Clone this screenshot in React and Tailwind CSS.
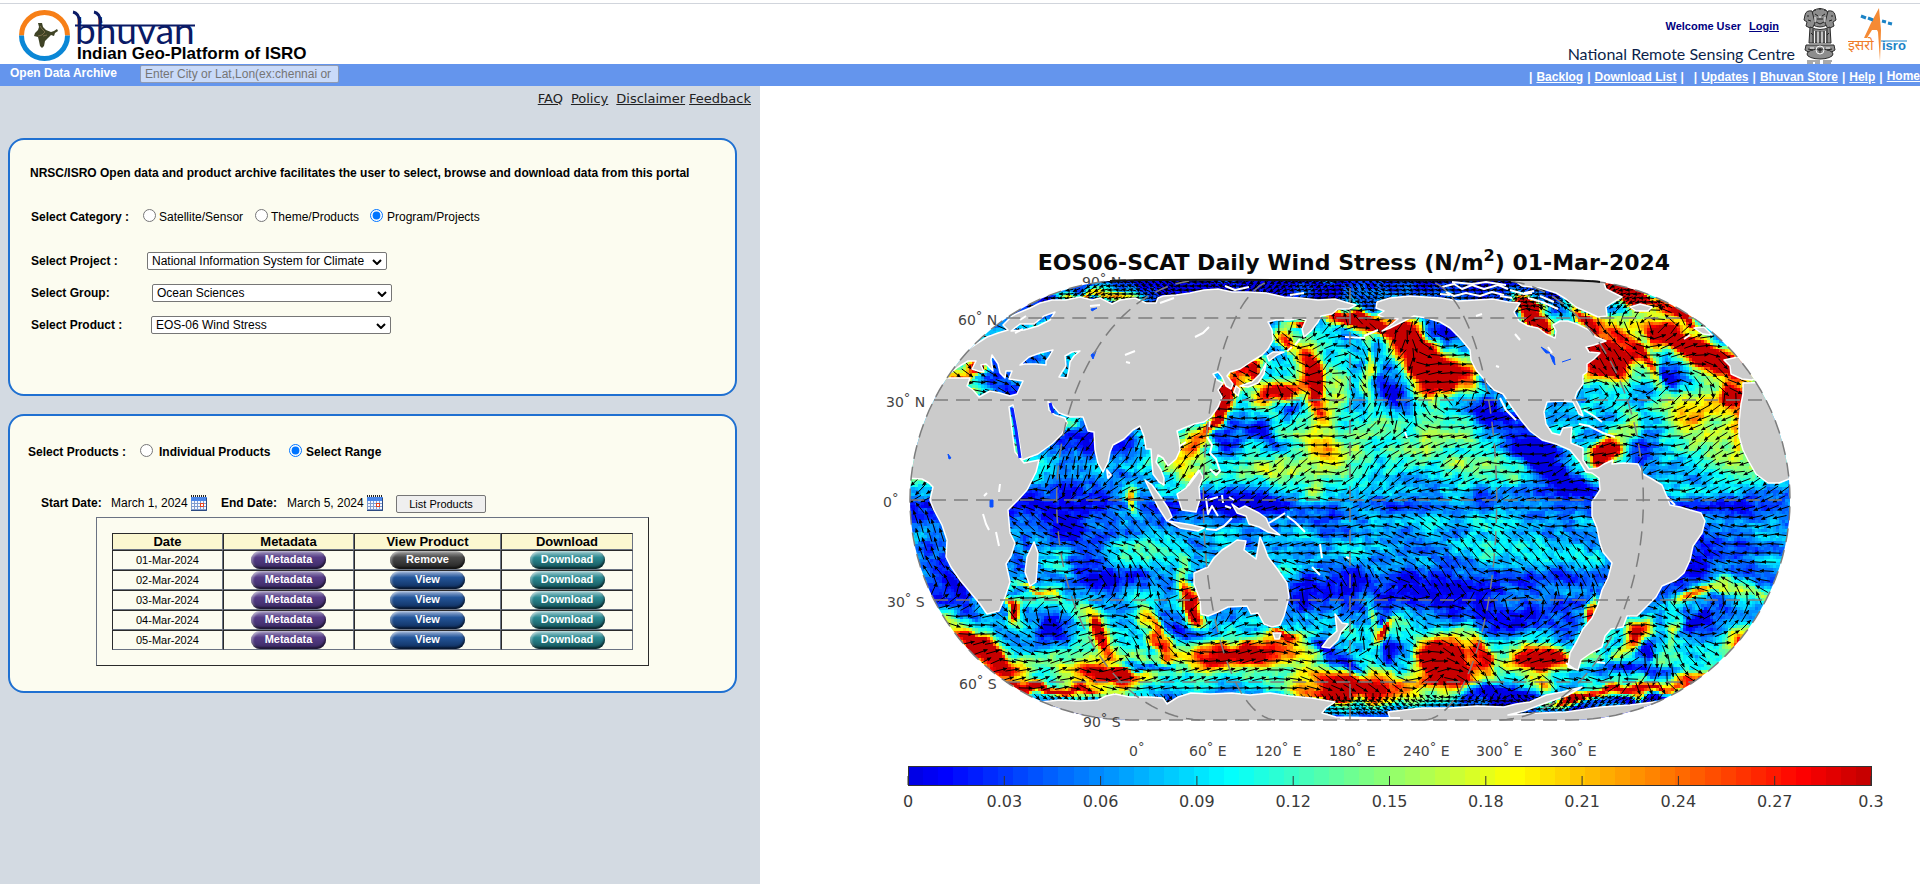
import React from 'react';

/* ---------- wind stress map ---------- */

const CX = 1350;
const CY = 500;
const HALF_W = 440;
const HALF_H = 220;

// Eckert IV, centred on 180E
const project = (lon, lat) => {
  const k = (2 + Math.PI / 2) * Math.sin((lat * Math.PI) / 180);
  let t = (lat * Math.PI) / 360;
  for (let i = 0; i < 30; i++) {
    const c = Math.cos(t);
    const d = 2 * c * (1 + c);
    if (d < 1e-6) break;
    t -= (t + Math.sin(t) * c + 2 * Math.sin(t) - k) / d;
  }
  return [
    CX + ((lon - 180) / 180) * HALF_W * ((1 + Math.cos(t)) / 2),
    CY - HALF_H * Math.sin(t),
  ];
};

const toPath = (pts) => 'M' + pts.map((p) => p[0].toFixed(1) + ' ' + p[1].toFixed(1)).join('L');

const meridian = (lon) => {
  const pts = [];
  for (let lat = -89; lat <= 89; lat += 2) pts.push(project(lon, lat));
  return pts;
};

const parallel = (lat) => [project(0, lat), project(360, lat)];

// half width of the globe at a given height
const edgeAt = (y) => {
  const s = (y - CY) / HALF_H;
  return s * s >= 1 ? 0 : (HALF_W * (1 + Math.sqrt(1 - s * s))) / 2;
};

const outline = (() => {
  const right = [];
  for (let a = -90; a <= 90; a += 3) {
    const r = (a * Math.PI) / 180;
    right.push([CX + (HALF_W * (1 + Math.cos(r))) / 2, CY + HALF_H * Math.sin(r)]);
  }
  const left = right.map(([x, y]) => [2 * CX - x, y]).reverse();
  return toPath([...right, ...left]) + 'Z';
})();

const jet = (u) => {
  const t = 0.1 + 0.83 * Math.max(0, Math.min(1, u));
  const ch = (c) => Math.round(255 * Math.max(0, Math.min(1, 1.5 - Math.abs(4 * t - c))));
  return `rgb(${ch(3)},${ch(2)},${ch(1)})`;
};

const hash = (x, y) => {
  const s = Math.sin(x * 127.1 + y * 311.7) * 43758.5453;
  return s - Math.floor(s);
};

const noise = (x, y) => {
  const xi = Math.floor(x);
  const yi = Math.floor(y);
  const fx = x - xi;
  const fy = y - yi;
  const u = fx * fx * (3 - 2 * fx);
  const v = fy * fy * (3 - 2 * fy);
  const a = hash(xi, yi) * (1 - u) + hash(xi + 1, yi) * u;
  const b = hash(xi, yi + 1) * (1 - u) + hash(xi + 1, yi + 1) * u;
  return a * (1 - v) + b * v;
};

const lerp = (knots, y) => {
  for (let i = 1; i < knots.length; i++) {
    if (y <= knots[i][0]) {
      const [y0, a] = knots[i - 1];
      const [y1, b] = knots[i];
      return a + ((b - a) * (y - y0)) / (y1 - y0);
    }
  }
  return knots[knots.length - 1][1];
};

// x, y, rx, ry, rotation, amount
const STORMS = [
  [1314, 376, 13, 34, -14, 1.1], [1288, 340, 9, 14, -50, 0.8], [1252, 370, 11, 14, 20, 1], [1220, 402, 8, 32, 28, 1.2],
  [1278, 392, 24, 12, -20, 0.9], [1358, 320, 36, 8, 12, 1.3], [1300, 318, 14, 4, -15, 1.1], [1424, 357, 18, 44, -38, 1.6],
  [1447, 376, 22, 13, 10, 0.8], [1465, 365, 8, 10, 0, 0.4], [1368, 365, 5, 40, 5, 0.35], [1340, 385, 8, 20, 0, 0.25],
  [1537, 318, 7, 24, -45, 1.5], [1530, 305, 14, 5, 10, 1], [1586, 320, 10, 26, -55, 1], [1609, 364, 23, 16, 10, 1.5],
  [1598, 347, 12, 7, 0, 1.3], [1624, 336, 9, 34, -45, 0.55], [1650, 366, 8, 28, -30, 0.55], [1688, 345, 52, 13, 27, 1.6],
  [1720, 358, 22, 9, 5, 1], [1703, 404, 48, 22, -5, 0.45], [1731, 394, 9, 11, 0, 1], [1629, 293, 42, 8, 22, 1.3],
  [1680, 313, 22, 6, 35, 1], [1605, 453, 9, 14, 20, 0.9], [1625, 420, 10, 26, 10, 0.25], [1736, 425, 8, 30, 0, 0.3],
  [1314, 442, 34, 16, 20, 0.36], [1280, 470, 60, 14, -5, 0.2], [1318, 488, 14, 14, 0, 0.25], [1434, 440, 70, 18, 0, 0.12],
  [1470, 465, 60, 16, 0, 0.1], [1184, 460, 20, 24, 30, 0.3], [1200, 440, 24, 8, -20, 0.3], [969, 366, 9, 7, 0, 1.1],
  [952, 376, 14, 6, 0, 0.5], [970, 390, 8, 6, 0, 0.5], [1067, 424, 10, 8, 0, 0.3],
  [1127, 500, 5, 14, -25, 0.6], [1110, 292, 30, 5, 0, 0.6], [1040, 320, 14, 5, -20, 0.35], [1080, 296, 20, 4, 0, 0.7],
  [981, 648, 34, 12, 38, 1.6], [1009, 611, 5, 11, 0, 1.2], [1030, 588, 22, 4, 20, 0.5], [1096, 627, 9, 26, -30, 0.95],
  [1108, 672, 34, 14, 0, 0.85], [1156, 634, 8, 32, -30, 0.65], [1196, 607, 7, 22, -30, 1], [1242, 652, 56, 14, -8, 0.9],
  [1280, 634, 14, 4, 0, 0.5], [1356, 688, 54, 14, 5, 0.95], [1322, 694, 20, 6, 0, 0.5], [1048, 688, 54, 5, 5, 1],
  [1384, 632, 5, 15, 42, 1], [1370, 618, 5, 20, -10, 0.4], [1442, 660, 26, 23, 0, 1.3], [1478, 650, 9, 26, -20, 0.55],
  [1455, 682, 30, 8, 0, 0.4], [1542, 656, 26, 12, -5, 1], [1540, 682, 10, 8, 0, 0.6], [1573, 697, 22, 5, -14, 1.2],
  [1640, 689, 60, 5, -4, 0.85], [1690, 679, 26, 5, 0, 0.5], [1589, 612, 4, 14, 10, 0.8], [1633, 637, 8, 20, 35, 0.8],
  [1697, 594, 24, 6, -22, 0.7], [1742, 588, 30, 9, 15, 0.45], [1733, 650, 5, 18, 45, 0.9], [1730, 637, 20, 7, -25, 0.4],
  [1675, 630, 6, 20, 20, 0.4], [1140, 552, 30, 26, 30, 0.22], [1055, 560, 22, 18, 0, 0.25], [1345, 535, 110, 20, 0, 0.04],
  [1500, 530, 60, 22, 20, 0.12], [1280, 562, 40, 12, 20, 0.2], [1184, 585, 8, 34, -15, 0.35], [1040, 600, 50, 12, 0, 0.16],
  [1720, 450, 36, 20, 20, 0.12], [1320, 410, 18, 10, 0, 0.2], [1390, 415, 40, 14, 0, 0.14], [1100, 640, 30, 30, 0, 0.15],
  // calm patches
  [1300, 350, 14, 12, 0, -0.3], [1282, 408, 14, 6, 0, -0.35], [1390, 390, 12, 26, -30, -0.3], [1440, 330, 18, 8, 30, -0.45],
  [1480, 410, 34, 10, 20, -0.4], [1530, 450, 26, 14, 30, -0.4], [1560, 475, 30, 14, 20, -0.35], [1670, 378, 20, 9, 35, -0.35],
  [1640, 440, 14, 40, 0, -0.25], [1255, 430, 28, 10, 20, -0.35], [1222, 436, 14, 12, 0, -0.4], [1050, 500, 40, 40, 0, -0.12],
  [1095, 440, 40, 34, 0, -0.25], [1240, 505, 50, 22, 0, -0.2], [1100, 535, 60, 18, 0, -0.14], [1105, 575, 40, 14, 0, -0.2],
  [1050, 630, 16, 14, 0, -0.4], [1200, 634, 24, 9, 0, -0.3], [1135, 664, 40, 5, 5, -0.6], [1340, 660, 40, 8, 40, -0.4],
  [1320, 590, 30, 24, 0, -0.2], [1450, 590, 70, 20, 0, -0.18], [1520, 620, 50, 14, 0, -0.22], [1395, 655, 16, 14, 40, -0.4],
  [1500, 692, 40, 10, 0, -0.4], [1570, 640, 12, 18, 0, -0.2], [1640, 650, 8, 9, 0, -0.45], [1625, 668, 40, 6, 0, -0.4],
  [1700, 560, 40, 18, 0, -0.14], [1700, 620, 30, 10, -30, -0.25], [950, 590, 14, 30, -30, -0.1], [1640, 700, 30, 3, 0, -0.35],
  [1600, 425, 20, 12, 0, -0.12], [1005, 380, 30, 14, 0, -0.1], [1378, 624, 8, 10, 0, -0.2],
].map(([x, y, rx, ry, deg, amt]) => {
  const a = (deg * Math.PI) / 180;
  return { x, y, rx, ry, amt, c: Math.cos(a), s: Math.sin(a), reach: 2.6 * Math.max(rx, ry) };
});

const BAND = [
  [280, 0.04], [305, 0.08], [320, 0.2], [360, 0.24], [400, 0.22], [425, 0.32], [465, 0.36], [490, 0.22],
  [505, 0.13], [525, 0.22], [560, 0.2], [585, 0.13], [610, 0.2], [640, 0.3], [665, 0.36], [685, 0.28], [705, 0.12],
];

const stressAt = (px, py) => {
  // bend the patches a little so that they do not read as ellipses
  const x = px + (noise(px / 16 + 3, py / 16) - 0.5) * 16;
  const y = py + (noise(px / 14, py / 14 + 7) - 0.5) * 11;
  let v = lerp(BAND, py);
  for (const b of STORMS) {
    const dx = x - b.x;
    const dy = y - b.y;
    if (Math.abs(dx) > b.reach || Math.abs(dy) > b.reach) continue;
    const p = (dx * b.c + dy * b.s) / b.rx;
    const q = (dy * b.c - dx * b.s) / b.ry;
    const d = p * p + q * q;
    if (d < 7) v += b.amt * Math.exp(-d);
  }
  v += (noise(px / 26, py / 14) - 0.5) * 0.2;
  v += (noise((px + py) / 12 + 40, (py - px / 2) / 8) - 0.5) * 0.16;
  v += (noise(px / 5 + 80, py / 4) - 0.5) * 0.1;
  v += (hash(px, py) - 0.5) * 0.04;
  return v;
};

const LEVELS = 36;
const CELL = 3;

// one path per colour level, equal neighbours on a row are merged
const cells = (() => {
  const d = Array.from({ length: LEVELS }, () => []);
  for (let y = CY - HALF_H; y < CY + HALF_H; y += CELL) {
    const half = Math.max(edgeAt(y), edgeAt(y + CELL), HALF_W / 2) + CELL;
    const x0 = CX - Math.ceil(half / CELL) * CELL;
    const x1 = CX + half;
    let start = x0;
    let last = -1;
    for (let x = x0; x <= x1 + CELL; x += CELL) {
      const level =
        x > x1 ? -2 : Math.max(0, Math.min(LEVELS - 1, Math.round(stressAt(x, y) * (LEVELS - 1))));
      if (level !== last) {
        if (last >= 0) d[last].push(`M${start} ${y}H${x}v${CELL}H${start}z`);
        start = x;
        last = level;
      }
    }
  }
  return d.map((p) => p.join(''));
})();

// x, y, radius, spin
const EDDIES = [
  [1298, 345, 34, 2.6], [1276, 372, 26, -2], [1345, 372, 34, -1.8], [1400, 392, 40, 2.4], [1448, 332, 30, 2.4],
  [1540, 330, 30, 1.5], [1655, 345, 40, 2.4], [1676, 385, 40, -2.4], [1600, 385, 26, -2], [1050, 625, 34, 2.6],
  [1125, 640, 26, -2], [1200, 628, 34, 2], [1378, 622, 28, -3], [1450, 672, 30, -2.6], [1520, 612, 34, 2.4],
  [1540, 676, 22, -2.6], [1636, 650, 32, -3.4], [1705, 610, 38, 2.8], [1100, 575, 34, 2], [1320, 595, 30, 1.8],
  [1145, 440, 20, 1.4], [1060, 500, 34, -1.2], [1410, 285, 60, -1.5],
];

const EAST = [[280, -1], [310, -0.4], [335, 1], [385, 1], [405, -0.6], [430, -1], [500, -1], [575, -1], [605, 0.4], [640, 1], [690, 1], [705, -1]];
const SOUTH = [[280, 0.1], [330, 0.3], [385, 0.6], [430, 0.2], [470, 0.55], [495, 0.2], [520, -0.2], [570, -0.6], [600, -0.2], [650, 0.3], [700, 0.1]];

const windAt = (x, y) => {
  let u = lerp(EAST, y);
  let v = lerp(SOUTH, y);
  for (const [ex, ey, r, spin] of EDDIES) {
    const dx = (x - ex) / r;
    const dy = (y - ey) / r;
    const g = spin * Math.exp(-(dx * dx + dy * dy));
    u += dy * g;
    v -= dx * g;
  }
  if (x < 1180 && y > 420 && y < 500) u += 0.5;
  if (x < 1000 && y > 500) { u += 0.6; v -= 0.5; }
  const turn = (noise(x / 34 + 9, y / 26) - 0.5) * 1.4;
  const a = Math.atan2(v, u) + turn;
  return [Math.cos(a), Math.sin(a)];
};

const arrows = (() => {
  let lines = '';
  let heads = '';
  let row = 0;
  for (let y = 282; y < 716; row++) {
    const polar = y < 308 || y > 692;
    const half = edgeAt(y) - 5;
    const step = polar ? 7 : 12;
    const len = polar ? 4 : 7;
    for (let x = CX - half + (row % 2) * 5; x < CX + half; x += step) {
      const [u, v] = windAt(x, y);
      const tx = x + u * len;
      const ty = y + v * len;
      lines += `M${(x - u * len).toFixed(1)} ${(y - v * len).toFixed(1)}L${tx.toFixed(1)} ${ty.toFixed(1)}`;
      heads += `M${tx.toFixed(1)} ${ty.toFixed(1)}L${(tx - u * 4 - v * 2).toFixed(1)} ${(ty - v * 4 + u * 2).toFixed(1)}L${(tx - u * 4 + v * 2).toFixed(1)} ${(ty - v * 4 - u * 2).toFixed(1)}z`;
    }
    y += polar ? 4 : 9;
  }
  return { lines, heads };
})();

const LAND = [
  // Africa, Europe and Asia, inner seas are holes
  `M890 400L987 337 998 333 1008 330 1003 325 1012 316 1018 313 1030 308 1040 303 1052 300 1066 300 1080 297 1092 300 1100 298 1112 304
   1120 300 1135 298 1146 303 1156 303 1158 298 1163 296 1176 295 1190 293 1204 290 1218 289 1232 292 1248 292 1266 293 1284 297 1300 298
   1318 300 1335 299 1345 302 1356 305 1349 309 1338 309 1332 314 1321 316 1318 322 1311 331 1304 337 1302 329 1306 320 1300 318 1290 320
   1276 320 1268 322 1272 330 1273 340 1268 349 1262 355 1252 361 1240 369 1230 372 1227 376 1233 384 1231 389 1226 386 1222 377 1218 372
   1213 374 1217 380 1223 383 1218 390 1222 397 1218 407 1211 417 1204 422 1194 424 1184 428 1177 431 1179 440 1180 450 1176 459 1168 466
   1163 458 1158 455 1156 462 1161 470 1164 478 1164 485 1159 482 1153 474 1152 463 1151 449 1146 449 1144 436 1140 426 1133 430 1124 439
   1113 445 1110 452 1108 462 1103 472 1098 463 1095 450 1094 432 1088 431 1083 417 1070 417 1059 413 1052 405 1048 401 1049 410 1055 415
   1065 418 1067 423 1062 434 1053 443 1038 454 1022 460 1020 446 1016 424 1013 405 1009 407 1012 430 1015 452 1024 463 1039 460 1036 472
   1027 490 1018 500 1008 510 1009 522 1010 533 1015 543 1011 556 1006 564 1010 582 1005 597 999 611 987 614 980 604 970 592 960 580
   951 567 946 557 947 540 942 525 934 510 930 500 933 487 929 483 922 479 906 478 880 478Z
   M944 378L958 367 968 361 976 361 972 369 978 371 984 372 981 365 986 364 993 371 991 360 992 355 998 364 1000 373 1005 378 1006 371
   1012 371 1009 379 1023 381 1017 394 1010 396 1000 393 990 391 979 397 973 390 967 386 970 378Z
   M1020 365L1029 357 1040 353 1053 350 1049 357 1046 361 1046 365 1036 364 1025 364Z
   M1065 356L1072 352 1080 351 1074 356 1070 362 1069 370 1067 378 1059 377 1062 372 1066 366Z
   M1011 331L1020 324 1034 324 1044 316 1055 312 1050 320 1038 326 1024 330Z`,
  // the Americas
  `M1377 302L1390 298 1410 296 1425 297 1441 298 1458 301 1476 300 1493 299 1508 302 1520 303 1514 312 1519 321 1528 326 1538 328 1546 334
   1555 338 1556 331 1553 325 1560 321 1568 321 1577 324 1589 330 1596 337 1606 341 1594 345 1586 347 1589 352 1600 353 1594 359 1587 364
   1587 372 1583 375 1583 384 1577 392 1575 398 1580 408 1583 416 1579 414 1573 402 1560 401 1547 402 1544 412 1546 424 1552 433 1560 435
   1563 428 1572 427 1571 436 1571 443 1583 448 1583 460 1589 469 1598 468 1604 464 1613 460 1612 464 1624 463 1638 464 1643 474 1652 479
   1662 485 1667 497 1670 505 1680 507 1690 510 1701 513 1705 521 1702 533 1693 546 1690 560 1684 573 1676 580 1662 586 1656 597 1646 607
   1637 616 1627 616 1623 627 1611 629 1605 636 1602 647 1591 653 1581 660 1578 670 1568 667 1570 653 1577 641 1583 629 1592 618 1598 605
   1602 590 1608 578 1612 563 1603 552 1600 543 1597 528 1592 516 1592 502 1600 490 1599 478 1592 473 1586 472 1580 462 1570 450 1556 444
   1542 440 1530 431 1521 420 1511 406 1503 394 1494 390 1483 378 1476 370 1471 360 1470 350 1460 338 1450 328 1440 322 1427 318 1414 316
   1402 322 1390 328 1382 331 1392 324 1398 319 1385 318 1378 315 1384 311 1376 308Z`,
  // Greenland
  'M1515 281L1540 278 1590 279 1604 283 1606 289 1622 297 1612 303 1606 307 1607 316 1598 317 1587 312 1576 307 1566 299 1556 293 1540 288 1522 286Z',
  // Iberia and north west Africa
  'M1724 360L1738 357 1765 374 1752 380 1742 379 1731 374 1730 366Z M1743 383L1790 382 1820 480 1789 479 1779 483 1768 483 1756 474 1748 460 1743 450 1739 436 1739 422 1741 404 1743 394Z',
  // Iceland, British isles
  'M1630 307L1640 304 1652 307 1648 311 1636 311Z M1694 328L1704 327 1712 335 1703 334Z',
  // Antarctica
  `M1040 702L1060 700 1080 701 1098 700 1106 696 1115 694 1130 697 1150 697 1163 698 1167 704 1178 697 1191 693 1210 694 1232 693 1250 695
   1270 693 1290 696 1311 698 1335 702 1326 708 1322 713 1336 717 1390 718 1388 712 1404 710 1422 708 1450 708 1477 706 1504 707 1516 704
   1530 702 1546 695 1562 692 1582 687 1568 695 1554 700 1540 705 1524 711 1508 715 1540 713 1566 712 1601 707 1630 705 1670 700 1640 740 1060 740Z`,
  // Australia, Tasmania
  `M1194 573L1208 567 1214 558 1222 550 1230 545 1237 540 1246 541 1244 550 1256 559 1258 548 1260 537 1264 546 1268 557 1278 570 1287 583
   1289 597 1284 616 1280 625 1272 627 1264 624 1258 613 1251 614 1247 606 1228 607 1218 612 1208 616 1201 614 1200 600 1194 584Z
   M1273 633L1281 633 1279 639 1275 639Z`,
  // Madagascar
  'M1034 542L1038 553 1037 570 1036 582 1030 586 1025 572 1027 557Z',
  // New Zealand
  'M1335 614L1342 623 1348 624 1341 632 1338 640 1330 648 1322 647 1328 639 1337 631Z',
  // Borneo, Sumatra, New Guinea, Java
  'M1177 494L1186 488 1192 479 1199 470 1203 477 1199 487 1200 499 1196 512 1182 510Z',
  'M1145 480L1152 485 1160 496 1168 508 1172 517 1167 521 1158 507Z',
  'M1232 504L1239 509 1245 506 1259 513 1266 518 1270 527 1280 535 1268 532 1259 527 1249 524 1246 516 1237 513Z',
  'M1168 521L1180 523 1192 525 1204 528 1198 531 1180 528Z',
  // Japan
  'M1284 352L1277 355 1269 361 1267 356 1273 352Z M1266 363L1264 374 1258 383 1248 387 1240 386 1252 382 1260 374Z M1236 386L1240 389 1238 396 1234 392Z',
];

const ISLANDS = [
  'M1207 437l5 8-2 8 6 6 4 12-4 4-6-6', 'M1200 470l-12 16', 'M1206 498l2 16 4-8 6 10M1208 500l10-3', 'M1206 529l10 1 8-4 8-8',
  'M1222 495l1 8M1229 497l5 3M1225 506l6 2', 'M1269 523l10-6 6-4', 'M1287 516l8 6 10 10', 'M1320 544l2 14M1312 567l8 8M1346 557l5 2',
  'M1579 424l10 2 14 7 12 4', 'M1584 410l10 6 8 6', 'M1107 470l1 8 3-3z', 'M1210 421l-1 6', 'M1500 398l6 12 10 10', 'M1180 446l6-4',
  'M1345 337l20 1M1378 330l-14 6', 'M1405 432l2 6', 'M1300 339l-5 6M1292 347l-5 4',
  'M1442 287l12-3 8 5 10-4 12 4 14-4 10 4M1446 292l8 4 12-3 14 3 12-4 12 3M1452 282l20 2 14-2 20 3',
  'M1440 294l10 1M1510 290l14 4 8-1M1500 296l12 2', 'M1528 298l14 4 16 7M1524 293l10-2M1540 296l14 6',
  'M1225 286l10 4 14-3M1290 295l14-2', 'M1160 303l14-5M1090 306l10-1', 'M1195 337l8-4 6-6', 'M1125 355l10-4M1126 362l4 1',
  'M984 496l3-3M1000 484l-1 8M983 514l3 10 3 6M996 532l3 14', 'M1515 334l5 6', 'M1667 497l8 8', 'M1340 718h60',
  'M1690 335l-6 4M1476 316l6-2M1496 366l3 1M1548 347l4 6', 'M1566 663l8 6', 'M1595 662l10 1', 'M1015 333l8-4M1020 320l6-4',
];

const LAKES = [
  'M990 500h3v7h-3z', 'M948 454l3 4-2 1z', 'M1541 347l5 3 4 3-4 0z', 'M1550 354l3 8 2 3-1-8z', 'M1562 362l9-3M1091 355l5-4-3 8z', 'M1091 309l6-1-5 3z',
];

const LAT_LABELS = [
  ['90', 'N', 1082, 287], ['60', 'N', 958, 325], ['30', 'N', 886, 407], ['0', '', 883, 507],
  ['30', 'S', 887, 607], ['60', 'S', 959, 689], ['90', 'S', 1083, 727],
];

const LON_LABELS = [
  ['0', '', 1129, 756], ['60', 'E', 1189, 756], ['120', 'E', 1255, 756], ['180', 'E', 1329, 756],
  ['240', 'E', 1403, 756], ['300', 'E', 1476, 756], ['360', 'E', 1550, 756],
];

const BAR_X = 908;
const BAR_W = 963;
const TICKS = ['0', '0.03', '0.06', '0.09', '0.12', '0.15', '0.18', '0.21', '0.24', '0.27', '0.3'];

const DegreeLabel = ({ label }) => {
  const [deg, side, x, y] = label;
  return (
    <text x={x} y={y} fontSize="14" fill="#444">
      {deg}
      <tspan dy="-5" fontSize="13">°</tspan>
      <tspan dy="5"> {side}</tspan>
    </text>
  );
};

const WindMap = () => (
  <svg
    viewBox="760 86 1160 798"
    className="block w-full h-auto font-['DejaVu_Sans',sans-serif]"
    role="img"
    aria-label="EOS06-SCAT Daily Wind Stress"
  >
    <defs>
      <clipPath id="globe">
        <path d={outline} />
      </clipPath>
    </defs>

    <text x="1354" y="270" textAnchor="middle" fontSize="22" fontWeight="700" fill="#0a0a0a">
      EOS06-SCAT Daily Wind Stress (N/m
      <tspan dy="-9" fontSize="16">2</tspan>
      <tspan dy="9">) 01-Mar-2024</tspan>
    </text>

    <DegreeLabel label={LAT_LABELS[0]} />

    <g clipPath="url(#globe)">
      <g shapeRendering="crispEdges">
        {cells.map((d, i) => (
          <path key={i} d={d} fill={jet(i / (LEVELS - 1))} />
        ))}
      </g>
      <path d={arrows.lines} stroke="#000" strokeWidth="1" fill="none" />
      <path d={arrows.heads} fill="#000" />
      <g fill="#cbcbcb" stroke="#fff" strokeWidth="1.5" strokeLinejoin="round" fillRule="evenodd">
        {LAND.map((d, i) => (
          <path key={i} d={d} />
        ))}
      </g>
      <g fill="none" stroke="#fff" strokeWidth="2" strokeLinejoin="round">
        {ISLANDS.map((d, i) => (
          <path key={i} d={d} />
        ))}
      </g>
      <path d="M1012 408L1016 430 1020 458M1050 403L1053 413" stroke="#0a1eff" strokeWidth="3" fill="none" />
      <path d={LAKES.join('')} fill="#0a50ff" stroke="#0a50ff" strokeWidth="1" />
    </g>

    <g fill="none" stroke="#7d7d7d" strokeWidth="1.5" strokeDasharray="14 8">
      {[60, 120, 180, 240, 300].map((lon) => (
        <path key={lon} d={toPath(meridian(lon))} />
      ))}
      {[60, 30, 0, -30, -60].map((lat) => (
        <path key={lat} d={toPath(parallel(lat))} />
      ))}
      <path d={outline} />
    </g>
    <path d="M1110 281C1140 279 1200 280 1350 280S1580 279 1600 282" stroke="#111" strokeWidth="2" fill="none" />

    {LAT_LABELS.slice(1).concat(LON_LABELS).map((l) => (
      <DegreeLabel key={l.join()} label={l} />
    ))}

    <g shapeRendering="crispEdges">
      {Array.from({ length: 64 }, (_, i) => (
        <rect key={i} x={BAR_X + (i * BAR_W) / 64} y="766" width={BAR_W / 64 + 1} height="19" fill={jet(i / 63)} />
      ))}
      <rect x={BAR_X} y="766" width={BAR_W} height="19" fill="none" stroke="#333" strokeWidth="1" />
    </g>
    {TICKS.map((t, i) => (
      <g key={t}>
        <path d={`M${BAR_X + (i * BAR_W) / 10} 785v-9`} stroke="#333" strokeWidth="1" />
        <text x={BAR_X + (i * BAR_W) / 10} y="807" textAnchor="middle" fontSize="16" fill="#3a3a3a">
          {t}
        </text>
      </g>
    ))}
  </svg>
);

/* ---------- header ---------- */

const BhuvanLogo = () => (
  <svg width="310" height="60" viewBox="0 4 310 60" className="block" role="img" aria-label="Bhuvan">
    <path d="M21.500 35.500a23 23 0 0 1 46 0" fill="none" stroke="#f77f17" strokeWidth="5" />
    <path d="M21.500 35.500a23 23 0 0 0 46 0" fill="none" stroke="#0b87d6" strokeWidth="5" />
    <path
      d="M38 23l4 0 1 4 3 3 5 2 3-1 3-2 1 2-3 2-1 3-3-1-3 3-3 3-1 5-2 2-2-2-1-5-1-4-4-1 1-3 3-3 1-3z"
      fill="#3f4326"
    />
    <path d="M40 26l2 3 3 3-3 3-4 1M43 36l4-1" stroke="#7a6d4a" strokeWidth="1" fill="none" />
    <text x="75" y="44" fontSize="37" fill="#0a1a66" className="font-['Lato',sans-serif]">bhuvan</text>
    <path d="M75 25.500H195" stroke="#0a1a66" strokeWidth="2" />
    <path d="M73 12q6 1 7 11M94 12q6 1 7 11" stroke="#0a1a66" strokeWidth="3" fill="none" />
    <text x="77" y="59" fontSize="17" fontWeight="700" fill="#000" className="font-['Liberation_Sans',sans-serif]">
      Indian Geo-Platform of ISRO
    </text>
  </svg>
);

const Emblem = () => (
  <svg width="34" height="58" viewBox="0 0 34 58" className="block" aria-hidden="true">
    <g fill="#8d8d8d" stroke="#2b2b2b" strokeWidth="1">
      <path d="M10 4q7-5 14 0l2 7-2 7q-7 4-14 0l-2-7z" />
      <path d="M9 4q-6-1-7 4l-1 5 3 2-1 4 6 3 3-6z" />
      <path d="M25 4q6-1 7 4l1 5-3 2 1 4-6 3-3-6z" />
      <path d="M7 20q10 5 20 0l1 16H6z" />
      <path d="M3 38h28l1 5q-15 12-30 0z" />
      <ellipse cx="17" cy="47" rx="13" ry="5" />
    </g>
    <g stroke="#222" strokeWidth="1" fill="none">
      <path d="M12 7l3 2M22 7l-3 2M14 12h6M13 15l4 2 4-2M12 4v-2M17 3v-2M22 4v-2M4 9h2M28 9h2M5 13l3 1M29 13l-3 1" />
      <path d="M10 22v14M13 24v12M17 24v12M21 24v12M24 22v14M8 26l2 2M26 26l-2 2" />
      <path d="M15 43h4M17 41v5M5 42l5 1M29 42l-5 1" />
    </g>
    <g stroke="#f2f2f2" strokeWidth="1" fill="none">
      <path d="M12 10v5M22 10v5M11.500 24v12M15 25v11M19 25v11M22.500 24v12M7 41h4M23 41h4M17 9v2" />
      <circle cx="17" cy="43" r="4" />
    </g>
    <path d="M4 56h6M12 56h5M20 56h8M4 54h13M20 54h9" stroke="#555" strokeWidth="1" />
  </svg>
);

const IsroLogo = () => (
  <svg width="60" height="56" viewBox="0 0 60 56" className="block" role="img" aria-label="ISRO">
    <path d="M31 0L33 22 32 53 30 24 29 22H24L19 30H16L23 15Z" fill="#f58a34" />
    <g stroke="#1b83c6" strokeWidth="3">
      <path d="M13 8l5 2M20 10l5 2M34 13l4 1M40 15l4 1" />
    </g>
    <text x="0" y="42" fontSize="14" fill="#f07c28" className="font-['Noto_Sans_Devanagari','Noto_Sans',sans-serif]">इसरो</text>
    <path d="M33 33H59" stroke="#1b83c6" strokeWidth="1" />
    <text x="34" y="42" fontSize="13" fontWeight="700" fill="#1b83c6" className="font-['Liberation_Sans',sans-serif]">isro</text>
  </svg>
);

const Header = () => (
  <header className="border-t border-gray-300 mt-[3px] h-[61px] flex justify-between bg-white">
    <div className="h-[60px]">
      <BhuvanLogo />
    </div>
    <div className="flex pr-3">
      <div className="flex flex-col items-end pt-[14px] pr-2">
        <p className="text-[11px] leading-4 font-bold text-[#000080] flex gap-2 pr-4">
          Welcome User
          <a href="#login" className="underline">Login</a>
        </p>
        <p className="font-['Lato',sans-serif] text-[16px] leading-6 text-[#0b1f4a] pt-2">
          National Remote Sensing Centre
        </p>
      </div>
      <div className="pt-[3px] mr-[11px]">
        <Emblem />
      </div>
      <div className="pt-1">
        <IsroLogo />
      </div>
    </div>
  </header>
);

const Bar = () => <span>|</span>;

const NavBar = () => (
  <div className="bg-[#6495ed] h-[22px] flex items-start text-white font-bold text-[12px] overflow-hidden">
    <h1 className="pl-[10px] w-[140px] leading-[18px]">Open Data Archive</h1>
    <input
      type="text"
      aria-label="Search a place"
      placeholder="Enter City or Lat,Lon(ex:chennai or 12.9,80.2)"
      className="w-[199px] h-[18px] mt-px px-1 text-[12px] font-normal bg-white/65 border border-gray-500/60 rounded-xs placeholder:text-[#757575]"
    />
    <nav className="ml-auto flex gap-1 leading-[26px]">
      <Bar />
      <a href="#backlog" className="underline">Backlog</a>
      <Bar />
      <a href="#downloads" className="underline">Download List</a>
      <Bar />
      <span className="w-0.5"></span>
      <Bar />
      <a href="#updates" className="underline">Updates</a>
      <Bar />
      <a href="#store" className="underline">Bhuvan Store</a>
      <Bar />
      <a href="#help" className="underline">Help</a>
      <Bar />
      <a href="#home" className="underline leading-6">Home</a>
    </nav>
  </div>
);

/* ---------- left side ---------- */

const Panel = ({ children, className }) => (
  <section className={'ml-2 mr-[23px] rounded-2xl border-2 border-[#1f70d1] bg-[#fcfcf0] ' + className}>
    {children}
  </section>
);

const SelectRow = ({ id, label, value, labelWidth }) => (
  <div className="flex items-center h-8">
    <label htmlFor={id} className={'font-bold ' + labelWidth}>{label}</label>
    <div className="relative">
      <select
        id={id}
        className="appearance-none block w-[240px] h-[18px] pl-1 pr-5 text-[12px] leading-4 bg-white border border-[#767676] rounded-xs"
      >
        <option>{value}</option>
      </select>
      <svg width="10" height="6" viewBox="0 0 10 6" className="absolute right-[5px] top-[7px] pointer-events-none" aria-hidden="true">
        <path d="M1 1l4 4 4-4" fill="none" stroke="#000" strokeWidth="2" />
      </svg>
    </div>
  </div>
);

const Radio = ({ name, label, checked, className }) => (
  <label className={'flex items-center ' + className}>
    <input type="radio" name={name} defaultChecked={checked} className="w-[13px] h-[13px] mb-1 accent-[#0075ff]" />
    {label}
  </label>
);

const CalendarIcon = () => (
  <svg width="16" height="16" viewBox="0 0 16 16" className="block" aria-hidden="true">
    <rect x="0" y="2" width="16" height="14" fill="#7f9ccf" />
    <rect x="0" y="2" width="16" height="4" fill="#4a86e8" />
    <path d="M0 1H16" stroke="#222" strokeWidth="2" strokeDasharray="1 1" />
    <g fill="#f4f8ff">
      {[6, 9, 12].map((y) => [1, 4, 7, 10, 13].map((x) => <rect key={x + '-' + y} x={x} y={y} width="2" height="2" />))}
    </g>
    <rect x="9.500" y="8.500" width="3" height="3" fill="#fff" stroke="#e8431f" strokeWidth="1" />
    <path d="M15.500 3V15.500H0" stroke="#2d4a80" strokeWidth="1" fill="none" />
  </svg>
);

const PILLS = {
  purple: 'from-[#a297bd] via-[#563c86] to-[#3a2a63]',
  gray: 'from-[#a5a5a5] via-[#4b4b4b] to-[#222222]',
  blue: 'from-[#a2b7d8] via-[#24569a] to-[#0e2d5c]',
  teal: 'from-[#a0cdd0] via-[#2c8b93] to-[#155158]',
};

const Pill = ({ tone, children }) => (
  <button
    type="button"
    className={
      'block mx-auto w-[75px] h-[18px] rounded-full bg-linear-to-b via-35% text-white font-bold text-[11px] leading-4 pb-[2px] shadow-[inset_-1px_-2px_2px_rgba(0,0,0,0.5),inset_2px_1px_2px_rgba(255,255,255,0.35)] ' +
      PILLS[tone]
    }
  >
    {children}
  </button>
);

const DATES = ['01-Mar-2024', '02-Mar-2024', '03-Mar-2024', '04-Mar-2024', '05-Mar-2024'];
const CELL_BORDER = 'p-0 border border-t-[#2a2a2a] border-l-[#2a2a2a] border-r-gray-500 border-b-gray-500';

const ProductTable = () => (
  <div className="ml-[86px] w-[553px] h-[149px] border border-t-gray-500 border-l-gray-500 border-r-[#2a2a2a] border-b-[#2a2a2a] p-[15px]">
    <table className="w-[521px] table-fixed border-separate border-spacing-0 text-center">
      <colgroup>
        <col className="w-[111px]" />
        <col className="w-[131px]" />
        <col className="w-[147px]" />
        <col className="w-[132px]" />
      </colgroup>
      <thead>
        <tr className="h-[17px] bg-[#fbf7d0] text-[13px] leading-[15px]">
          {['Date', 'Metadata', 'View Product', 'Download'].map((h) => (
            <th key={h} className={CELL_BORDER}>{h}</th>
          ))}
        </tr>
      </thead>
      <tbody>
        {DATES.map((date, i) => (
          <tr key={date} className="h-5 text-[11px] leading-4">
            <td className={CELL_BORDER}>{date}</td>
            <td className={CELL_BORDER}><Pill tone="purple">Metadata</Pill></td>
            <td className={CELL_BORDER}>
              {i === 0 ? <Pill tone="gray">Remove</Pill> : <Pill tone="blue">View</Pill>}
            </td>
            <td className={CELL_BORDER}><Pill tone="teal">Download</Pill></td>
          </tr>
        ))}
      </tbody>
    </table>
  </div>
);

const Sidebar = () => (
  <aside className="w-[760px] shrink-0 bg-[#d3dae2] text-[12px]">
    <div className="h-[52px] flex justify-end pr-[9px] pt-1 font-['DejaVu_Sans',sans-serif] text-[13px] leading-[18px] text-[#222]">
      <a href="#faq" className="underline mr-2">FAQ</a>
      <a href="#policy" className="underline mr-2">Policy</a>
      <a href="#disclaimer" className="underline mr-1">Disclaimer</a>
      <a href="#feedback" className="underline">Feedback</a>
    </div>

    <Panel className="h-[258px] pl-5 pt-[25px]">
      <p className="font-bold leading-4">
        NRSC/ISRO Open data and product archive facilitates the user to select, browse and download data from this portal
      </p>
      <div className="flex items-center h-4 mt-7 pl-px">
        <span className="font-bold w-[112px]">Select Category :</span>
        <Radio name="category" label="Satellite/Sensor" className="w-[112px] gap-[3px]" />
        <Radio name="category" label="Theme/Products" className="w-[115px] gap-[3px]" />
        <Radio name="category" label="Program/Projects" checked className="gap-1" />
      </div>
      <div className="mt-5 pl-px">
        <SelectRow id="project" label="Select Project :" value="National Information System for Climate and Environment Studies" labelWidth="w-[116px]" />
        <SelectRow id="group" label="Select Group:" value="Ocean Sciences" labelWidth="w-[121px]" />
        <SelectRow id="product" label="Select Product :" value="EOS-06 Wind Stress" labelWidth="w-[120px]" />
      </div>
    </Panel>

    <Panel className="h-[279px] mt-[18px] pt-7">
      <div className="flex items-center h-4 pl-[18px] font-bold">
        <span className="w-[112px]">Select Products :</span>
        <Radio name="mode" label="Individual Products" className="w-[149px] gap-[6px]" />
        <Radio name="mode" label="Select Range" checked className="gap-1" />
      </div>
      <div className="flex items-start h-[22px] mt-[35px] pl-[31px] leading-4">
        <span className="font-bold w-[70px]">Start Date:</span>
        <span className="w-20">March 1, 2024</span>
        <button type="button" aria-label="Pick start date"><CalendarIcon /></button>
        <span className="font-bold w-[66px] ml-[14px]">End Date:</span>
        <span className="w-20">March 5, 2024</span>
        <button type="button" aria-label="Pick end date"><CalendarIcon /></button>
        <button type="button" className="w-[90px] h-[18px] ml-[13px] text-[11px] leading-4 bg-[#efefef] border border-[#767676] rounded-xs">
          List Products
        </button>
      </div>
      <ProductTable />
    </Panel>
  </aside>
);

export default function App() {
  return (
    <div className="min-h-screen flex flex-col bg-white text-black font-['Liberation_Sans',sans-serif] overflow-hidden">
      <Header />
      <NavBar />
      <main className="flex flex-1">
        <Sidebar />
        <div className="flex-1 min-w-0">
          <WindMap />
        </div>
      </main>
    </div>
  );
}
